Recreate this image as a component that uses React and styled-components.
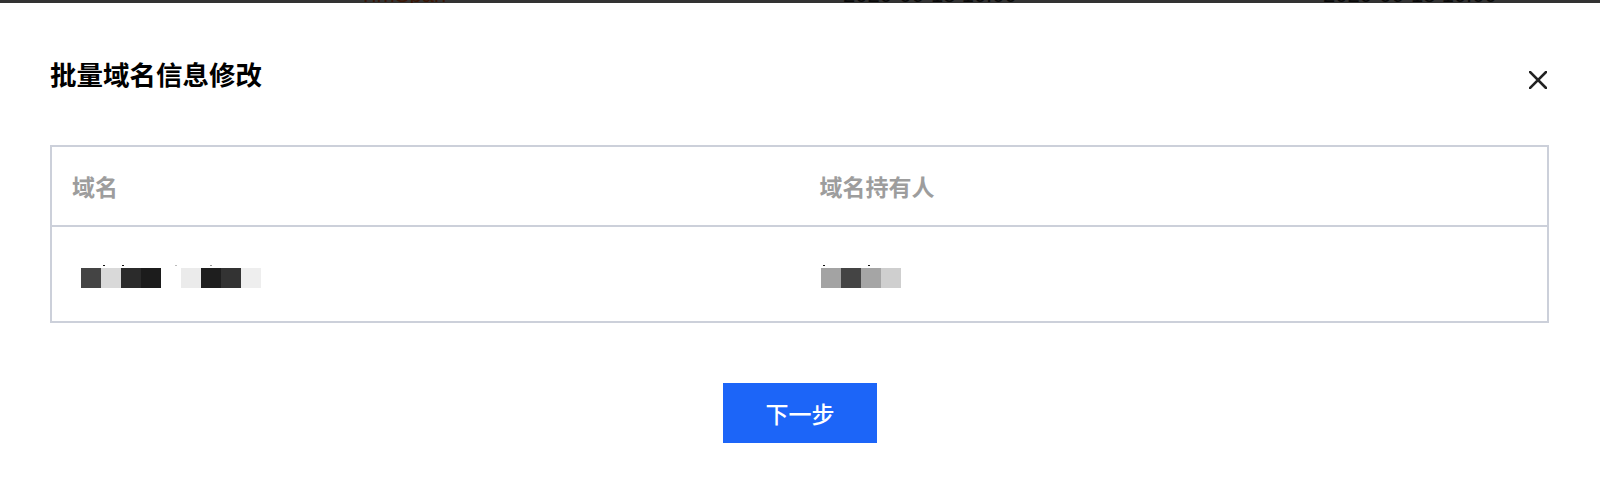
import React from "react";
import styled, { createGlobalStyle } from "styled-components";

const GlobalStyle = createGlobalStyle`
  html, body {
    margin: 0;
    padding: 0;
    background: #ffffff;
  }
  body {
    font-family: "Noto Sans CJK SC", "Noto Sans", sans-serif;
    color: #000;
  }
`;

const rows = [
  {
    domain: {
      offset: 29,
      blocks: ["#444444", "#d9d9d9", "#2b2b2b", "#1c1c1c", "#ffffff", "#ebebeb", "#1e1e1e", "#333333", "#eeeeee"],
      dots: [
        { x: 22, c: "#111" },
        { x: 41, c: "#111" },
        { x: 94, c: "#bbb" },
        { x: 129, c: "#999" },
      ],
    },
    owner: {
      offset: 21,
      blocks: ["#a3a3a3", "#444444", "#a5a5a5", "#cfcfcf"],
      dots: [
        { x: 2, c: "#111" },
        { x: 47, c: "#111" },
      ],
    },
  },
];

export default function App() {
  return (
    <>
      <GlobalStyle />
      <Backdrop>
        <PeekText $at={359} $color="#3a1606">TimSpan</PeekText>
        <PeekText $at={843}>2020-06-18 10:00</PeekText>
        <PeekText $at={1323}>2020-06-18 10:00</PeekText>
      </Backdrop>
      <Modal>
        <ModalHeader>
          <Title>批量域名信息修改</Title>
          <CloseButton aria-label="close">
            <svg width="18" height="18" viewBox="0 0 18 18">
              <path d="M1 1L17 17M17 1L1 17" stroke="#222" strokeWidth="2.6" strokeLinecap="square" />
            </svg>
          </CloseButton>
        </ModalHeader>

        <Table>
          <HeadRow>
            <HeadCell>域名</HeadCell>
            <HeadCell>域名持有人</HeadCell>
          </HeadRow>
          {rows.map((r, i) => (
            <BodyRow key={i}>
              <BodyCell>
                <Mosaic $offset={r.domain.offset}>
                  <DotRow>
                    {r.domain.dots.map((d, j) => (
                      <Dot key={j} $x={d.x} $c={d.c} />
                    ))}
                  </DotRow>
                  <BlockRow>
                    {r.domain.blocks.map((c, j) => (
                      <Block key={j} $c={c} />
                    ))}
                  </BlockRow>
                </Mosaic>
              </BodyCell>
              <BodyCell>
                <Mosaic $offset={r.owner.offset}>
                  <DotRow>
                    {r.owner.dots.map((d, j) => (
                      <Dot key={j} $x={d.x} $c={d.c} />
                    ))}
                  </DotRow>
                  <BlockRow>
                    {r.owner.blocks.map((c, j) => (
                      <Block key={j} $c={c} />
                    ))}
                  </BlockRow>
                </Mosaic>
              </BodyCell>
            </BodyRow>
          ))}
        </Table>

        <Footer>
          <PrimaryButton>下一步</PrimaryButton>
        </Footer>
      </Modal>
    </>
  );
}

const Backdrop = styled.div`
  position: relative;
  height: 3px;
  background: #333333;
  overflow: hidden;
`;

const PeekText = styled.span`
  position: absolute;
  left: ${(p) => p.$at}px;
  bottom: -3px;
  font-family: "Liberation Sans", Arial, sans-serif;
  font-size: 22px;
  line-height: 1;
  color: ${(p) => p.$color || "#0a0a0a"};
  white-space: nowrap;
`;

const Modal = styled.div`
  padding: 53px 51px 0 50px;
`;

const ModalHeader = styled.div`
  display: flex;
  justify-content: space-between;
  align-items: flex-start;
  height: 36px;
`;

const Title = styled.h2`
  margin: 0;
  font-size: 26.5px;
  line-height: 36px;
  font-weight: 700;
  color: #000;
`;

const CloseButton = styled.button`
  margin: 15px 2px 0 0;
  padding: 0;
  width: 18px;
  height: 18px;
  border: 0;
  background: none;
  display: flex;
  cursor: pointer;
`;

const Table = styled.div`
  margin-top: 53px;
  border: 2px solid #ccd0da;
`;

const HeadRow = styled.div`
  display: grid;
  grid-template-columns: 1fr 1fr;
  height: 78px;
  border-bottom: 2px solid #ccd0da;
`;

const HeadCell = styled.div`
  display: flex;
  align-items: center;
  padding-left: 20px;
  font-size: 23px;
  font-weight: 700;
  color: #9d9d9d;
`;

const BodyRow = styled.div`
  display: grid;
  grid-template-columns: 1fr 1fr;
  height: 94px;
`;

const BodyCell = styled.div`
  padding-top: 38px;
`;

const Mosaic = styled.div`
  margin-left: ${(p) => p.$offset}px;
  display: flex;
  flex-direction: column;
`;

const DotRow = styled.div`
  display: flex;
  height: 1px;
  margin-bottom: 2px;
`;

const Dot = styled.span`
  position: relative;
  left: ${(p) => p.$x}px;
  width: 2px;
  height: 1px;
  margin-right: -2px;
  background: ${(p) => p.$c};
`;

const BlockRow = styled.div`
  display: flex;
`;

const Block = styled.span`
  width: 20px;
  height: 20px;
  background: ${(p) => p.$c};
`;

const Footer = styled.div`
  display: flex;
  justify-content: center;
  padding: 60px 0 0 1px;
`;

const PrimaryButton = styled.button`
  width: 154px;
  height: 60px;
  border: 0;
  background: #1c65f8;
  color: #fff;
  font-family: "Noto Sans CJK SC", sans-serif;
  font-size: 23px;
  font-weight: 500;
  cursor: pointer;
`;
